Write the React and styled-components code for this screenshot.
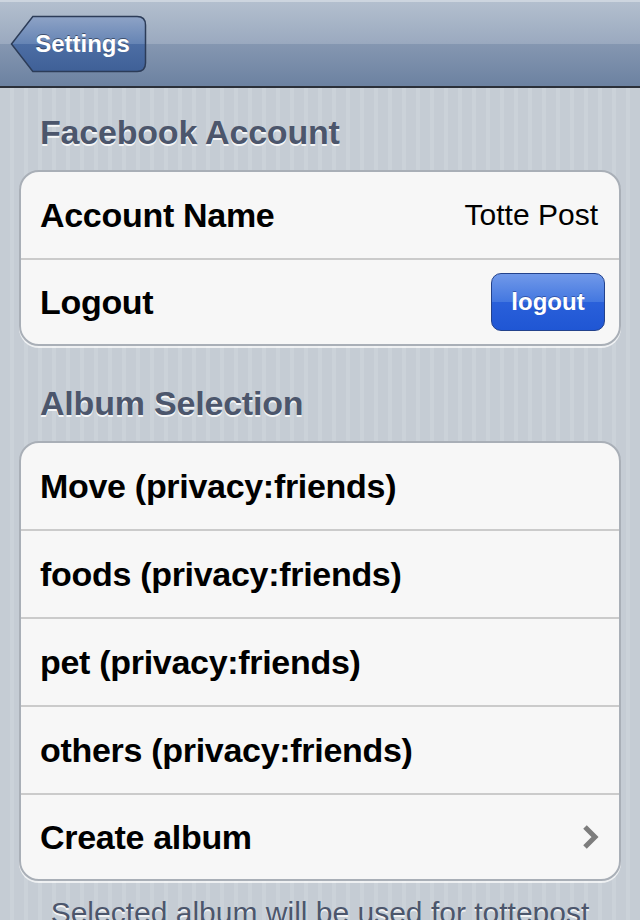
import React from 'react';
import styled, {createGlobalStyle} from 'styled-components';

const FONT = `"Liberation Sans", Helvetica, Arial, sans-serif`;

const accountRows = [
  {label: 'Account Name', detail: 'Totte Post'},
  {label: 'Logout', button: 'logout'},
];

const albums = [
  'Move (privacy:friends)',
  'foods (privacy:friends)',
  'pet (privacy:friends)',
  'others (privacy:friends)',
];

const BackArrow = () => (
  <BackShape viewBox="0 0 138 58" preserveAspectRatio="none">
    <defs>
      <linearGradient id="backFill" x1="0" y1="0" x2="0" y2="1">
        <stop offset="0" stopColor="#8ea3c6" />
        <stop offset="0.5" stopColor="#6584b4" />
        <stop offset="0.5" stopColor="#4d6ea4" />
        <stop offset="1" stopColor="#3f6097" />
      </linearGradient>
    </defs>
    <path
      d="M23 1.5 H128 Q136.5 1.5 136.5 10 V48 Q136.5 56.5 128 56.5 H23 L1.5 29 Z"
      fill="url(#backFill)"
      stroke="#2c3c58"
      strokeWidth="1.5"
    />
  </BackShape>
);

const Chevron = () => (
  <ChevronIcon width="18" height="26" viewBox="0 0 18 26">
    <path d="M3 3 L13 13 L3 23" fill="none" stroke="#7d7d7d" strokeWidth="5" />
  </ChevronIcon>
);

export default function App() {
  return (
    <>
      <GlobalStyle />
      <Screen>
        <NavBar>
          <BackButton>
            <BackArrow />
            <BackLabel>Settings</BackLabel>
          </BackButton>
        </NavBar>

        <Content>
          <SectionHeader>Facebook Account</SectionHeader>
          <Group>
            {accountRows.map(row => (
              <Row key={row.label}>
                <RowLabel>{row.label}</RowLabel>
                {row.detail && <RowDetail>{row.detail}</RowDetail>}
                {row.button && <BlueButton>{row.button}</BlueButton>}
              </Row>
            ))}
          </Group>

          <SectionHeader>Album Selection</SectionHeader>
          <Group>
            {albums.map(name => (
              <Row key={name}>
                <RowLabel>{name}</RowLabel>
              </Row>
            ))}
            <Row>
              <RowLabel>Create album</RowLabel>
              <Chevron />
            </Row>
          </Group>

          <Footer>Selected album will be used for tottepost</Footer>
        </Content>
      </Screen>
    </>
  );
}

/******************************************************************
** Styled Components
*/
const GlobalStyle = createGlobalStyle`
  html, body {
    margin: 0;
    padding: 0;
    background: #c5ccd4;
  }
  * {
    box-sizing: border-box;
  }
`;

const Screen = styled.div`
  width: 640px;
  height: 920px;
  overflow: hidden;
  font-family: ${FONT};
  background: repeating-linear-gradient(
    90deg,
    #c5ccd4 0px,
    #c5ccd4 10px,
    #cbd2d9 10px,
    #cbd2d9 14px
  );
`;

const NavBar = styled.div`
  height: 88px;
  display: flex;
  align-items: center;
  padding: 0 0 1px 10px;
  border-top: 2px solid #cdd5df;
  border-bottom: 2px solid #2b3039;
  background: linear-gradient(
    to bottom,
    #b3bfce 0%,
    #9aa9bf 50%,
    #8597b1 50%,
    #6c82a1 100%
  );
`;

const BackButton = styled.button`
  position: relative;
  width: 137px;
  height: 58px;
  margin-top: 1px;
  padding: 0 16px 0 24px;
  border: 0;
  background: none;
  display: flex;
  align-items: center;
  justify-content: center;
  cursor: pointer;
`;

const BackShape = styled.svg`
  position: absolute;
  inset: 0;
  width: 100%;
  height: 100%;
`;

const BackLabel = styled.span`
  position: relative;
  font-family: ${FONT};
  font-weight: bold;
  font-size: 24px;
  color: #fff;
  text-shadow: 0 -1px 0 rgba(30, 40, 60, 0.6);
`;

const Content = styled.div`
  padding: 0 19px;
`;

const SectionHeader = styled.div`
  padding: 24px 0 18px 21px;
  font-size: 34px;
  line-height: 40px;
  font-weight: bold;
  letter-spacing: -0.2px;
  color: #4c566c;
  text-shadow: 0 2px 0 rgba(255, 255, 255, 0.85);
`;

const Group = styled.div`
  background: #f7f7f7;
  border: 2px solid #a9afb7;
  border-radius: 20px;
  box-shadow: 0 2px 0 rgba(255, 255, 255, 0.7);
  margin-bottom: 13px;
  overflow: hidden;
`;

const Row = styled.div`
  height: 88px;
  display: flex;
  align-items: center;
  justify-content: space-between;
  padding: 0 13px 0 19px;
  border-top: 2px solid #cbcbcb;

  &:first-child {
    border-top: 0;
    height: 86px;
  }

  &:last-child:not(:first-child) {
    height: 86px;
  }
`;

const RowLabel = styled.span`
  font-size: 34px;
  font-weight: bold;
  letter-spacing: -0.3px;
  color: #000;
`;

const RowDetail = styled.span`
  font-size: 30px;
  color: #000;
  margin-right: 8px;
`;

const ChevronIcon = styled.svg`
  margin-right: 6px;
`;

const BlueButton = styled.button`
  width: 114px;
  height: 58px;
  margin-right: 1px;
  border: 1.5px solid #23428c;
  border-radius: 10px;
  font-family: ${FONT};
  font-size: 24px;
  font-weight: bold;
  color: #fff;
  text-shadow: 0 -1px 0 rgba(0, 0, 60, 0.35);
  background: linear-gradient(
    to bottom,
    #7199e9 0%,
    #4377e0 50%,
    #2a60da 50%,
    #1f56d4 100%
  );
  cursor: pointer;
`;

const Footer = styled.div`
  padding-top: 1px;
  text-align: center;
  font-size: 30px;
  line-height: 36px;
  color: #4c566c;
  text-shadow: 0 2px 0 rgba(255, 255, 255, 0.8);
`;
